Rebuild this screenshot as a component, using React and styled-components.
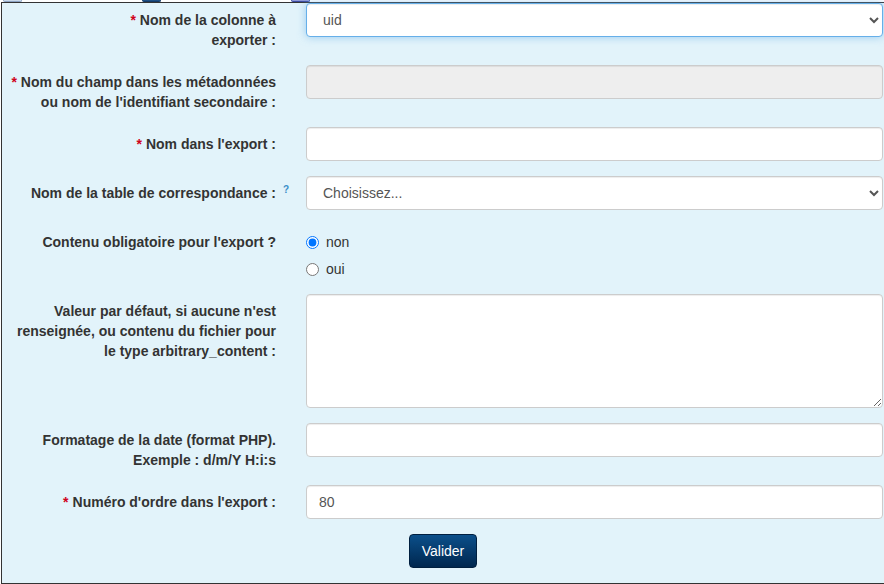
import React from "react";
import styled, { createGlobalStyle } from "styled-components";

const Global = createGlobalStyle`
  html, body {
    margin: 0;
    padding: 0;
    background: #ffffff;
    overflow: hidden;
  }
  body {
    font-family: "Liberation Sans", Arial, Helvetica, sans-serif;
    font-size: 14px;
    line-height: 20px;
    color: #333;
  }
`;

const Stubs = styled.div`
  display: flex;
  height: 2px;
  overflow: hidden;
`;

const Stub = styled.span`
  display: block;
  width: 19px;
  height: 2px;
  margin-left: ${(p) => p.$left}px;
  background: ${(p) => p.$color};
  border: 1px solid ${(p) => p.$edge};
  border-top: none;
  border-radius: 0 0 3px 3px;
  box-sizing: border-box;
`;

const Panel = styled.form`
  width: 898px;
  margin-left: 1px;
  box-sizing: border-box;
  border: 1px solid #333;
  background: #e2f3fa;
  padding: 0 0 15px;
`;

const Row = styled.div`
  display: grid;
  grid-template-columns: 289px 1fr;
  margin-bottom: 15px;
`;

const Label = styled.label`
  position: relative;
  display: block;
  text-align: right;
  font-weight: bold;
  padding: 7px 15px 0 0;
  line-height: 20px;
`;

const Star = styled.span`
  color: #d0021b;
  margin-right: 4px;
`;

const Help = styled.sup`
  position: absolute;
  top: 9px;
  right: 2px;
  font-size: 10px;
  line-height: 10px;
  color: #3a8ec9;
  font-weight: bold;
`;

const Field = styled.div`
  padding: 0 15px;
`;

const controlCss = `
  display: block;
  width: 100%;
  box-sizing: border-box;
  height: 34px;
  padding: 6px 12px;
  font-family: "Liberation Sans", Arial, Helvetica, sans-serif;
  font-size: 14px;
  line-height: 20px;
  color: #555;
  background: #fff;
  border: 1px solid #ccc;
  border-radius: 4px;
  box-shadow: inset 0 1px 1px rgba(0, 0, 0, 0.075);
  outline: none;
`;

const Input = styled.input`
  ${controlCss}
  &:disabled {
    background: #eee;
  }
`;

const Select = styled.select`
  ${controlCss}
  ${(p) =>
    p.$focus &&
    `
    border-color: #66afe9;
    box-shadow: inset 0 1px 1px rgba(0,0,0,.075), 0 0 8px rgba(102,175,233,.6);
  `}
`;

const TextArea = styled.textarea`
  ${controlCss}
  height: 114px;
  resize: vertical;
`;

const Radio = styled.label`
  display: flex;
  align-items: center;
  gap: 7px;
  padding-top: 7px;
  min-height: 20px;
  font-weight: normal;
  input {
    width: 13px;
    height: 13px;
    margin: 0;
  }
`;

const Actions = styled.div`
  display: flex;
  justify-content: center;
  padding-right: 14px;
`;

const Button = styled.button`
  height: 34px;
  padding: 6px 12px;
  font-family: "Liberation Sans", Arial, Helvetica, sans-serif;
  font-size: 14px;
  line-height: 20px;
  color: #fff;
  border: 1px solid #001f3f;
  border-radius: 4px;
  background: linear-gradient(to bottom, #0b4f8a 0%, #00274f 100%);
  cursor: pointer;
`;

export default function App() {
  return (
    <>
      <Global />
      <Stubs>
        <Stub $left={3} $color="#c9d8ea" $edge="#8da4c4" />
        <Stub $left={120} $color="#1d4f85" $edge="#143a66" />
        <Stub $left={130} $color="#8e97d6" $edge="#3b4aa0" />
      </Stubs>
      <Panel onSubmit={(e) => e.preventDefault()}>
        <Row>
          <Label>
            <Star>*</Star>Nom de la colonne à
            <br />
            exporter :
          </Label>
          <Field>
            <Select $focus defaultValue="uid">
              <option value="uid">uid</option>
            </Select>
          </Field>
        </Row>
        <Row>
          <Label>
            <Star>*</Star>Nom du champ dans les métadonnées ou nom de l'identifiant secondaire :
          </Label>
          <Field>
            <Input disabled />
          </Field>
        </Row>
        <Row>
          <Label>
            <Star>*</Star>Nom dans l'export :
          </Label>
          <Field>
            <Input />
          </Field>
        </Row>
        <Row>
          <Label>
            Nom de la table de correspondance :<Help>?</Help>
          </Label>
          <Field>
            <Select defaultValue="">
              <option value="">Choisissez...</option>
            </Select>
          </Field>
        </Row>
        <Row>
          <Label>Contenu obligatoire pour l'export ?</Label>
          <Field>
            <Radio>
              <input type="radio" name="mandatory" defaultChecked />
              non
            </Radio>
            <Radio>
              <input type="radio" name="mandatory" />
              oui
            </Radio>
          </Field>
        </Row>
        <Row>
          <Label>
            Valeur par défaut, si aucune n'est renseignée, ou contenu du fichier pour le type arbitrary_content :
          </Label>
          <Field>
            <TextArea />
          </Field>
        </Row>
        <Row>
          <Label>Formatage de la date (format PHP). Exemple : d/m/Y H:i:s</Label>
          <Field>
            <Input />
          </Field>
        </Row>
        <Row>
          <Label>
            <Star>*</Star>Numéro d'ordre dans l'export :
          </Label>
          <Field>
            <Input defaultValue="80" />
          </Field>
        </Row>
        <Actions>
          <Button type="submit">Valider</Button>
        </Actions>
      </Panel>
    </>
  );
}
